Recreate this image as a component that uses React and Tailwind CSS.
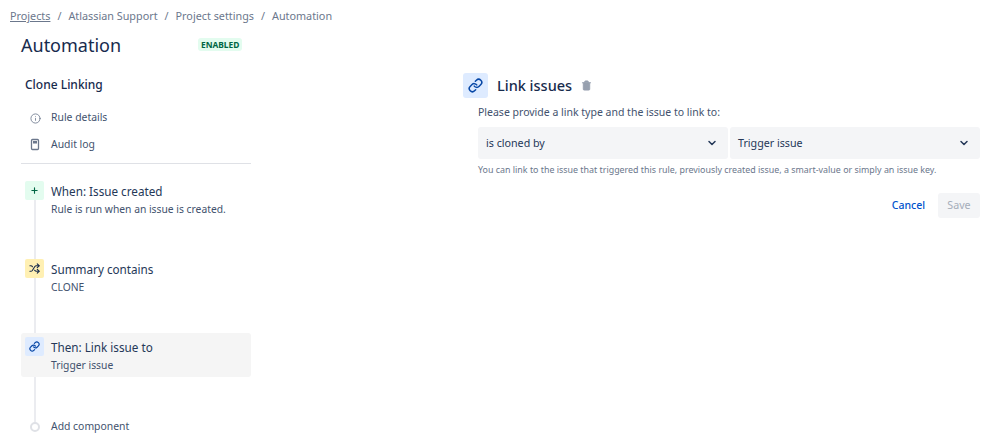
import { ChevronDown, Info, Plus, Shuffle, Link, Trash2 } from "lucide-react";

const font = { fontFamily: '"Noto Sans", sans-serif' };

function Step({ icon, iconClass, title, subtitle, active }) {
  return (
    <div className={`relative flex h-11 items-start gap-[7px] rounded-[3px] pl-1 pt-1 ${active ? "bg-[#f5f5f5]" : ""}`}>
      <div className={`flex h-[19px] w-[19px] shrink-0 items-center justify-center rounded-[2px] ${iconClass}`}>{icon}</div>
      <div>
        <div className="text-[11.7px] leading-[20px] text-[#253858]">{title}</div>
        <div className="text-[10.3px] leading-[16px] text-[#42526e]">{subtitle}</div>
      </div>
    </div>
  );
}

function AuditIcon() {
  return (
    <svg width="12" height="14" viewBox="0 0 12 14" fill="none">
      <rect x="2.5" y="1.5" width="7" height="10" rx="1" stroke="#6b778c" strokeWidth="1.3" />
      <rect x="4" y="3" width="4" height="2.5" fill="#6b778c" />
    </svg>
  );
}

function Select({ label, className }) {
  return (
    <div className={`flex h-8 items-center justify-between rounded-[3px] bg-[#f4f5f7] pl-2 pr-[10px] text-[10.7px] text-[#253858] ${className}`}>
      <span>{label}</span>
      <ChevronDown size={12} strokeWidth={3} className="text-[#253858]" />
    </div>
  );
}

export default function App() {
  return (
    <div style={font} className="h-[445px] w-[998px] overflow-hidden bg-white text-[#172b4d]">
      <nav className="flex h-[33px] items-center gap-[7px] pl-[10px] text-[10.8px] text-[#6b778c]">
        <span className="underline">Projects</span>
        <span>/</span>
        <span>Atlassian Support</span>
        <span>/</span>
        <span>Project settings</span>
        <span>/</span>
        <span>Automation</span>
      </nav>

      <div className="flex">
        <aside className="ml-[21px] w-[230px] shrink-0">
          <div className="flex h-[26px] items-center">
            <h1 className="mb-[2px] w-[177px] text-[18px] font-normal leading-[26px] text-[#172b4d]">Automation</h1>
            <span className="mb-[4px] rounded-[3px] bg-[#e3fcef] px-[3px] py-px text-[8.4px] font-bold leading-[11px] text-[#006644]">
              ENABLED
            </span>
          </div>

          <h2 className="mt-[17px] pl-1 text-[12px] font-medium leading-[18px] text-[#172b4d]">Clone Linking</h2>

          <div className="mt-[15px] space-y-[9px] border-b border-[#dfe1e6] pb-[9px] text-[10.4px] text-[#42526e]">
            <div className="flex h-[18px] items-center gap-[10px] pl-[9px]">
              <Info size={11} strokeWidth={1.8} className="text-[#6b778c]" />
              <span>Rule details</span>
            </div>
            <div className="flex h-[18px] items-center gap-[10px] pl-[8px]">
              <AuditIcon />
              <span>Audit log</span>
            </div>
          </div>

          <div className="relative mt-[13px]">
            <div className="absolute bottom-[10px] left-[13px] top-[10px] w-[2px] bg-[#ebecf0]" />
            <div className="space-y-[34px]">
              <Step
                icon={<Plus size={9} strokeWidth={3} className="text-[#006644]" />}
                iconClass="bg-[#e3fcef]"
                title="When: Issue created"
                subtitle="Rule is run when an issue is created."
              />
              <Step
                icon={<Shuffle size={11} strokeWidth={2.4} className="text-[#172b4d]" />}
                iconClass="bg-[#fff0b3]"
                title="Summary contains"
                subtitle="CLONE"
              />
              <Step
                active
                icon={<Link size={11} strokeWidth={2.6} className="text-[#0747a6]" />}
                iconClass="bg-[#deebff]"
                title="Then: Link issue to"
                subtitle="Trigger issue"
              />
            </div>
            <div className="relative mt-[41px] flex h-[18px] items-center gap-[11px] pl-[9px] text-[10.4px] text-[#42526e]">
              <div className="h-[10px] w-[10px] rounded-full border-2 border-[#dfe1e6] bg-white" />
              <span>Add component</span>
            </div>
          </div>
        </aside>

        <main className="ml-[212px] mt-[40px] w-[517px]">
          <div className="flex items-center">
            <div className="flex h-[25px] w-[25px] items-center justify-center rounded-[3px] bg-[#deebff]">
              <Link size={15} strokeWidth={2.4} className="text-[#0747a6]" />
            </div>
            <h2 className="ml-[9px] text-[14.5px] font-medium text-[#172b4d]">Link issues</h2>
            <Trash2 size={11} strokeWidth={2} className="ml-[9px] fill-[#97a0af] text-[#97a0af]" />
          </div>
          <div className="pl-[15px]">
            <p className="mt-[6px] text-[10.5px] leading-[17px] text-[#42526e]">
              Please provide a link type and the issue to link to:
            </p>
            <div className="mt-[6px] flex gap-[2px]">
              <Select label="is cloned by" className="w-[250px]" />
              <Select label="Trigger issue" className="w-[250px]" />
            </div>
            <p className="mt-[4px] text-[8.9px] leading-[14px] text-[#6b778c]">
              You can link to the issue that triggered this rule, previously created issue, a smart-value or simply an issue key.
            </p>
            <div className="mt-[16px] flex items-center justify-end gap-[13px]">
              <button className="text-[10.5px] font-medium text-[#0052cc]">Cancel</button>
              <button className="h-[25px] w-[42px] rounded-[3px] bg-[#f4f5f7] text-[10.7px] text-[#a5adba]">Save</button>
            </div>
          </div>
        </main>
      </div>
    </div>
  );
}
